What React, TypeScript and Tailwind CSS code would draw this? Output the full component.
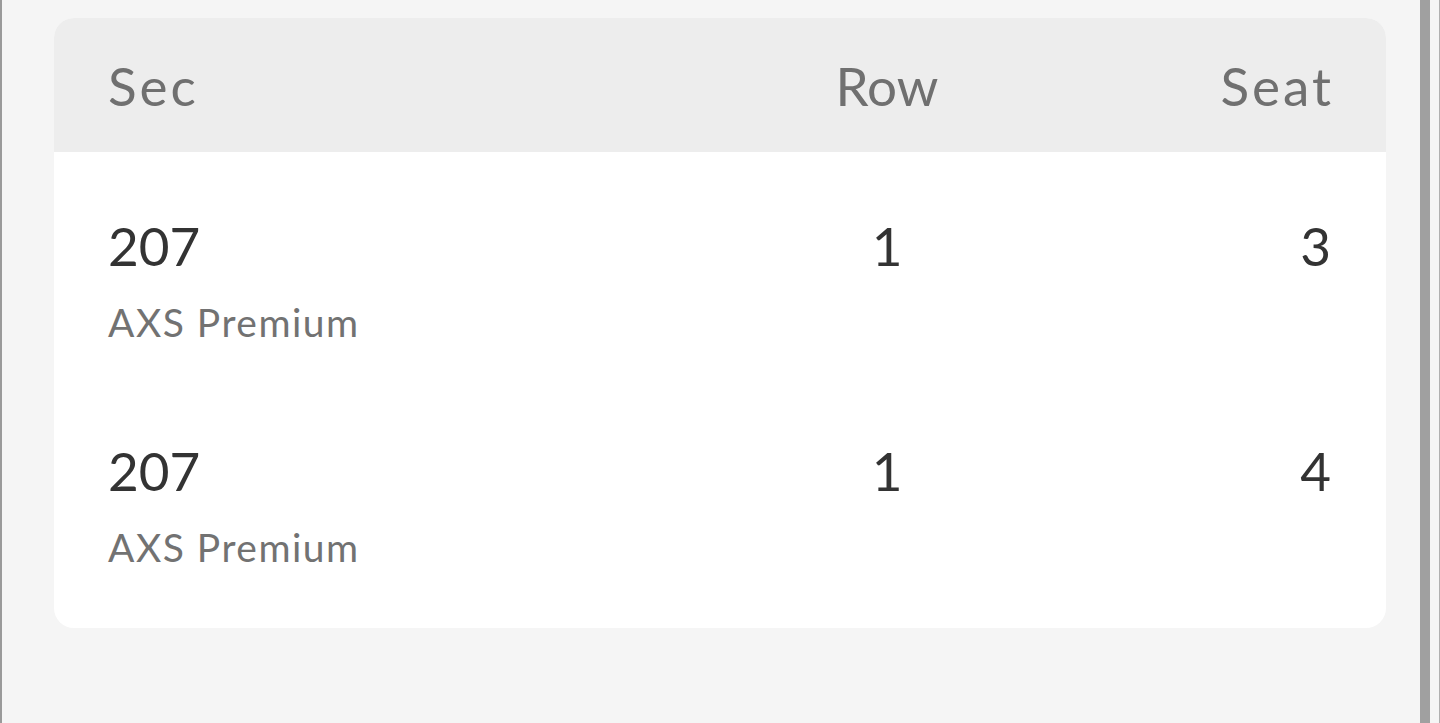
const rows = [
    { sec: '207', label: 'AXS Premium', row: '1', seat: '3' },
    { sec: '207', label: 'AXS Premium', row: '1', seat: '4' },
];

export default function App() {
    return (
        <div className="h-[723px] w-[1440px] overflow-hidden bg-[#f5f5f5] flex font-['Lato',sans-serif]">
            <div className="w-[2px] bg-[#9a9a9a]"></div>
            <div className="flex-1 pt-[18px] pl-[52px] pr-[34px]">
                <div className="rounded-[20px] bg-white overflow-hidden">
                    <div className="h-[134px] bg-[#ededed] grid grid-cols-[671px_216px_1fr] items-center pl-[54px] pr-[55px] text-[53px] leading-[53px] text-[#707070]">
                        <span className="tracking-[3px]">Sec</span>
                        <span className="text-center">Row</span>
                        <span className="text-right tracking-[3px] -mr-[3px]">Seat</span>
                    </div>
                    <div className="pt-[67px] pb-[61px] pl-[54px] pr-[55px] flex flex-col gap-[102px]">
                        {rows.map((r, i) => (
                            <div key={i} className="grid grid-cols-[671px_216px_1fr]">
                                <div className="flex flex-col gap-[31px]">
                                    <span className="text-[53px] leading-[53px] text-[#333333]">{r.sec}</span>
                                    <span className="text-[39px] leading-[39px] tracking-[1.5px] text-[#727272]">{r.label}</span>
                                </div>
                                <span className="text-center text-[53px] leading-[53px] text-[#333333]">{r.row}</span>
                                <span className="text-right text-[53px] leading-[53px] text-[#333333]">{r.seat}</span>
                            </div>
                        ))}
                    </div>
                </div>
            </div>
            <div className="w-[10px] bg-[#a0a0a0]"></div>
            <div className="w-[9px] bg-[#f5f5f5]"></div>
            <div className="w-px bg-[#b0b0b0]"></div>
        </div>
    );
}
